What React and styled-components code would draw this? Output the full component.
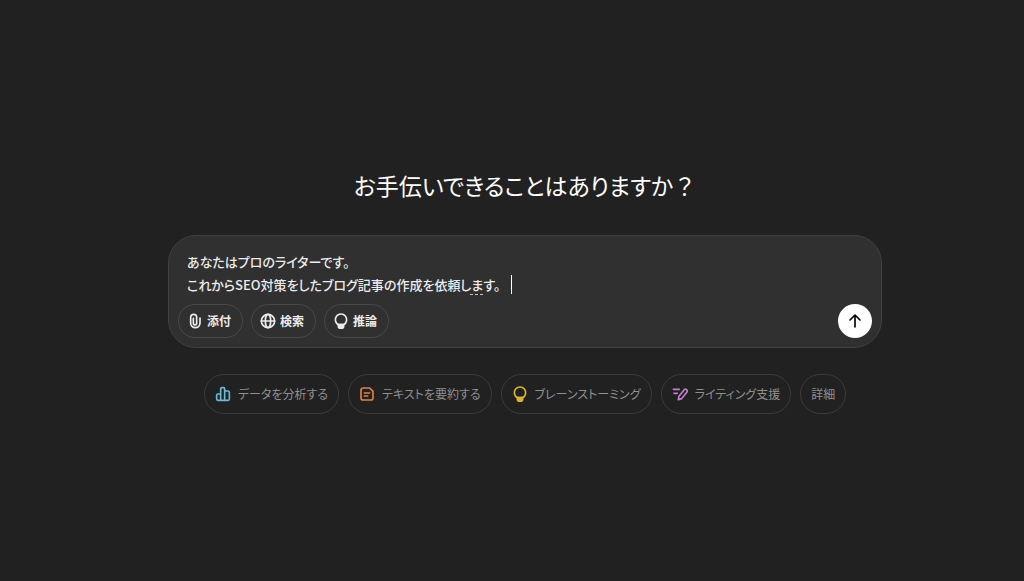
import React, { useState } from 'react'
import styled, { createGlobalStyle } from 'styled-components'

function App() {
    const [prompt, setPrompt] = useState('あなたはプロのライターです。\nこれからSEO対策をしたブログ記事の作成を依頼します。');

    return (
        <>
            <GlobalStyle />
            <Page>
                <Title>お手伝いできることはありますか<FullWidth>？</FullWidth></Title>
                <Composer onSubmit={(e) => e.preventDefault()}>
                    <PromptArea>
                        <Prompt
                            aria-label="プロンプト"
                            rows={2}
                            spellCheck={false}
                            value={prompt}
                            onChange={(e) => setPrompt(e.target.value)}
                        />
                        <SpellMark />
                        <Caret />
                    </PromptArea>
                    <Toolbar>
                        <ToolButton type="button"><ClipIcon />添付</ToolButton>
                        <ToolButton type="button"><GlobeIcon />検索</ToolButton>
                        <ToolButton type="button"><BulbIcon />推論</ToolButton>
                        <SendButton type="submit" aria-label="送信"><ArrowIcon /></SendButton>
                    </Toolbar>
                </Composer>
                <Suggestions>
                    <Chip type="button" $color="#6cb8d6"><ChartIcon />データを分析する</Chip>
                    <Chip type="button" $color="#d9834a"><NoteIcon />テキストを要約する</Chip>
                    <Chip type="button" $color="#d6b437"><BulbIcon />ブレーンストーミング</Chip>
                    <Chip type="button" $color="#c27fcb"><WriteIcon />ライティング支援</Chip>
                    <Chip type="button">詳細</Chip>
                </Suggestions>
            </Page>
        </>
    )
}

export default App

const ClipIcon = () => (
    <Icon viewBox="0 0 24 24">
        <path d="M9.500 8v7.500a2.500 2.500 0 0 0 5 0V6.500a4.500 4.500 0 0 0-9 0V15a7 7 0 0 0 14 0V7.500" />
    </Icon>
)

const GlobeIcon = () => (
    <Icon viewBox="0 0 24 24">
        <circle cx="12" cy="12" r="10" />
        <ellipse cx="12" cy="12" rx="4" ry="10" />
        <path d="M2 12h20" />
    </Icon>
)

const BulbIcon = () => (
    <Icon viewBox="0 0 24 24">
        <path d="M8 17.500a8.500 8.500 0 1 1 8 0z" />
        <path d="M8 17.500h8V20a3 3 0 0 1-3 3h-2a3 3 0 0 1-3-3z" fill="currentColor" />
    </Icon>
)

const ArrowIcon = () => (
    <Icon viewBox="0 0 24 24">
        <path d="M12 21V3M4.500 10.500 12 3l7.500 7.500" />
    </Icon>
)

const ChartIcon = () => (
    <Icon viewBox="0 0 24 24">
        <path d="M8.500 21.500v-17a2 2 0 0 1 2-2h2a2 2 0 0 1 2 2v17M8.500 12h-4a2 2 0 0 0-2 2v5.500a2 2 0 0 0 2 2h15a2 2 0 0 0 2-2v-10a2 2 0 0 0-2-2h-5" />
    </Icon>
)

const NoteIcon = () => (
    <Icon viewBox="0 0 24 24">
        <path d="M6.500 3H16l5 5v9.500a3.500 3.500 0 0 1-3.500 3.500h-11A3.500 3.500 0 0 1 3 17.500v-11A3.500 3.500 0 0 1 6.500 3zM8 10.500h8M8 15h5" />
    </Icon>
)

const WriteIcon = () => (
    <Icon viewBox="0 0 24 24">
        <path d="M2 5h9M3 11h5M9.500 20.500l.7-4.700L18 6a2.600 2.600 0 0 1 4.200 3.300L14.300 19z" />
    </Icon>
)

const GlobalStyle = createGlobalStyle`
    * {
        box-sizing: border-box;
    }
    body {
        margin: 0;
        background: #212121;
    }
    body, button, textarea {
        font-family: "Noto Sans CJK JP", sans-serif;
        font-feature-settings: "palt";
    }
`

const Page = styled.main`
    min-height: 100vh;
    display: flex;
    flex-direction: column;
    align-items: center;
    justify-content: center;
    padding: 0 0 0 26px;
`

const Title = styled.h1`
    margin: 0 0 32px;
    color: #fff;
    font-size: 23px;
    font-weight: 400;
    line-height: 36px;
`

const FullWidth = styled.span`
    font-feature-settings: normal;
`

const Composer = styled.form`
    width: 100%;
    max-width: 714px;
    padding: 14px 9px 9px;
    background: #303030;
    border: 1px solid #414141;
    border-radius: 28px;
`

const PromptArea = styled.div`
    position: relative;
    padding: 0 9px;
`

const Prompt = styled.textarea`
    display: block;
    width: 100%;
    padding: 0;
    border: 0;
    outline: 0;
    resize: none;
    overflow: hidden;
    background: none;
    color: #ececec;
    font-size: 13px;
    font-weight: 500;
    line-height: 23px;
`

const Caret = styled.span`
    position: absolute;
    left: 333px;
    top: 25px;
    width: 1px;
    height: 19px;
    background: #fff;
`

const SpellMark = styled.span`
    position: absolute;
    left: 292px;
    top: 44px;
    width: 13px;
    border-bottom: 1px dashed #c4c4c4;
`

const Toolbar = styled.div`
    display: flex;
    align-items: center;
    gap: 8px;
    margin-top: 8px;
`

const Icon = styled.svg`
    width: 16px;
    height: 16px;
    flex: none;
    fill: none;
    stroke: currentColor;
    stroke-width: 2.5;
    stroke-linecap: round;
    stroke-linejoin: round;
`

const ToolButton = styled.button`
    display: flex;
    align-items: center;
    gap: 4px;
    height: 34px;
    padding: 0 11px 1px 8px;
    background: none;
    border: 1px solid #484848;
    border-radius: 17px;
    color: #ececec;
    font-size: 12px;
    font-weight: 700;
    cursor: pointer;
`

const SendButton = styled.button`
    display: flex;
    align-items: center;
    justify-content: center;
    width: 34px;
    height: 34px;
    margin-left: auto;
    padding: 0;
    background: #fff;
    border: 0;
    border-radius: 50%;
    color: #000;
    cursor: pointer;
`

const Suggestions = styled.div`
    display: flex;
    flex-wrap: wrap;
    justify-content: center;
    gap: 9px;
    margin-top: 26px;
`

const Chip = styled.button`
    display: flex;
    align-items: center;
    gap: 7px;
    height: 40px;
    padding: 0 10px 1px;
    background: none;
    border: 1px solid #3b3b3b;
    border-radius: 20px;
    color: #8f8f8f;
    font-size: 12px;
    cursor: pointer;

    ${Icon} {
        color: ${props => props.$color};
    }
`
